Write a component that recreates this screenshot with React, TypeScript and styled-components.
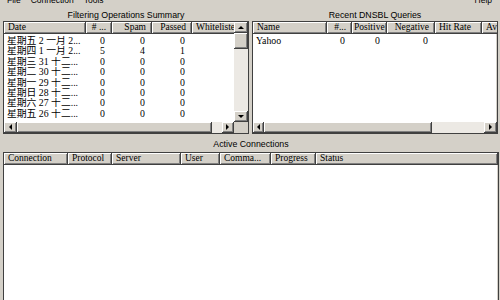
import React from "react";
import styled, { createGlobalStyle } from "styled-components";

const GlobalStyle = createGlobalStyle`
  html, body { margin: 0; padding: 0; background: #d4d0c8; }
  body { width: 500px; height: 300px; overflow: hidden; }
`;

const SANS = `"Liberation Sans", Arial, sans-serif`;
const SERIF = `"Liberation Serif", "Noto Sans CJK TC", serif`;

const Window = styled.div`
  box-sizing: border-box;
  width: 500px;
  height: 300px;
  overflow: hidden;
  background: #d4d0c8;
  padding: 0 1px 0 3px;
  display: flex;
  flex-direction: column;
  color: #000;
`;

const MenuBar = styled.div`
  flex: none;
  height: 13px;
  margin-top: -4px;
  display: flex;
  align-items: flex-start;
  padding-left: 4px;
  gap: 10px;
  font: 8.5px/9px ${SANS};
`;

const MenuItem = styled.span<{ $right?: boolean }>`
  margin-left: ${(p) => (p.$right ? "auto" : "0")};
  margin-right: ${(p) => (p.$right ? "7px" : "0")};
`;

const TopRow = styled.div`
  flex: none;
  display: grid;
  grid-template-columns: 246px 246px;
  column-gap: 3px;
`;

const Panel = styled.div`
  display: flex;
  flex-direction: column;
`;

const SectionTitle = styled.div<{ $tall?: boolean }>`
  flex: none;
  font: 8.8px ${SANS};
  line-height: ${(p) => (p.$tall ? "15px" : "12px")};
  padding-top: ${(p) => (p.$tall ? "3px" : "0")};
  text-align: center;
  white-space: nowrap;
`;

const Frame = styled.div<{ $height: number; $v: boolean; $h: boolean }>`
  box-sizing: border-box;
  height: ${(p) => p.$height}px;
  flex: none;
  border: 1px solid #404040;
  box-shadow: inset -1px -1px 0 #d4d0c8;
  background: #fff;
  display: grid;
  grid-template-columns: ${(p) => (p.$v ? "1fr 14px" : "1fr")};
  grid-template-rows: ${(p) => (p.$h ? "1fr 11px" : "1fr")};
  overflow: hidden;
`;

const ListArea = styled.div`
  overflow: hidden;
  min-width: 0;
  display: flex;
  flex-direction: column;
`;

const HeaderRow = styled.div`
  display: flex;
  height: 12px;
  flex: none;
`;

const HeaderCell = styled.div<{ $w?: number; $right?: boolean }>`
  box-sizing: border-box;
  flex: ${(p) => (p.$w ? `0 0 ${p.$w}px` : "1 0 auto")};
  height: 12px;
  background: #d4d0c8;
  border-right: 1px solid #404040;
  border-bottom: 1px solid #404040;
  box-shadow: inset 1px 1px 0 #fff, inset -1px -1px 0 #808080;
  font: 9.5px/11px ${SERIF};
  padding: 0 ${(p) => (p.$right ? "5px" : "3px")} 0 ${(p) => (p.$right ? "2px" : "4px")};
  text-align: ${(p) => (p.$right ? "right" : "left")};
  white-space: nowrap;
  overflow: hidden;
`;

const Body = styled.div`
  padding-top: 2px;
  flex: 1;
`;

const Row = styled.div`
  display: flex;
  height: 10.4px;
`;

const Cell = styled.div<{ $w: number; $right?: boolean }>`
  box-sizing: border-box;
  flex: 0 0 ${(p) => p.$w}px;
  font: 9.8px/10.4px ${SERIF};
  text-align: ${(p) => (p.$right ? "right" : "left")};
  padding: 0 ${(p) => (p.$right ? "7px" : "0")} 0 ${(p) => (p.$right ? "0" : "3px")};
  white-space: nowrap;
  overflow: hidden;
`;

const VBar = styled.div`
  display: flex;
  flex-direction: column;
  background: #ece9e4;
`;

const HBar = styled.div`
  display: flex;
  background: #ece9e4;
  min-width: 0;
`;

const Knob = styled.div<{ $size?: number }>`
  box-sizing: border-box;
  flex: ${(p) => (p.$size ? `0 0 ${p.$size}px` : "1 1 auto")};
  background: #d4d0c8;
  border-right: 1px solid #404040;
  border-bottom: 1px solid #404040;
  box-shadow: inset 1px 1px 0 #fff, inset -1px -1px 0 #808080;
  display: flex;
  align-items: center;
  justify-content: center;
`;

const Track = styled.div`
  flex: 1 1 auto;
`;

const Corner = styled.div`
  background: #d4d0c8;
`;

type Dir = "up" | "down" | "left" | "right";

const Arrow = styled.span<{ $dir: Dir }>`
  width: 0;
  height: 0;
  border-style: solid;
  border-color: transparent;
  ${(p) =>
    p.$dir === "up"
      ? "border-width: 0 3px 3px 3px; border-bottom-color: #000;"
      : p.$dir === "down"
      ? "border-width: 3px 3px 0 3px; border-top-color: #000;"
      : p.$dir === "left"
      ? "border-width: 3px 3px 3px 0; border-right-color: #000;"
      : "border-width: 3px 0 3px 3px; border-left-color: #000;"}
`;

type Col = { label: string; w?: number; right?: boolean };

type ScrollSpec = { start: number; thumb: number; end: number };

function ListView(props: {
  height: number;
  cols: Col[];
  rows: string[][];
  v?: ScrollSpec;
  h?: ScrollSpec;
}) {
  const { height, cols, rows, v, h } = props;
  return (
    <Frame $height={height} $v={!!v} $h={!!h}>
      <ListArea>
        <HeaderRow>
          {cols.map((c, i) => (
            <HeaderCell key={i} $w={c.w} $right={c.right}>
              {c.label}
            </HeaderCell>
          ))}
        </HeaderRow>
        <Body>
          {rows.map((r, i) => (
            <Row key={i}>
              {r.map((t, j) => (
                <Cell key={j} $w={cols[j].w ?? 100} $right={cols[j].right}>
                  {t}
                </Cell>
              ))}
            </Row>
          ))}
        </Body>
      </ListArea>
      {v && (
        <VBar>
          <Knob $size={v.start}>
            <Arrow $dir="up" />
          </Knob>
          <Knob $size={v.thumb} />
          <Track />
          <Knob $size={v.end}>
            <Arrow $dir="down" />
          </Knob>
        </VBar>
      )}
      {h && (
        <HBar>
          <Knob $size={h.start}>
            <Arrow $dir="left" />
          </Knob>
          <Knob $size={h.thumb} />
          <Track />
          <Knob $size={h.end}>
            <Arrow $dir="right" />
          </Knob>
        </HBar>
      )}
      {v && h && <Corner />}
    </Frame>
  );
}

const filterCols: Col[] = [
  { label: "Date", w: 82 },
  { label: "# ...", w: 26, right: true },
  { label: "Spam", w: 40, right: true },
  { label: "Passed", w: 40, right: true },
  { label: "Whitelisted", w: 60 },
];

const filterRows = [
  ["星期五 2 一月 2...", "0", "0", "0"],
  ["星期四 1 一月 2...", "5", "4", "1"],
  ["星期三 31 十二...", "0", "0", "0"],
  ["星期二 30 十二...", "0", "0", "0"],
  ["星期一 29 十二...", "0", "0", "0"],
  ["星期日 28 十二...", "0", "0", "0"],
  ["星期六 27 十二...", "0", "0", "0"],
  ["星期五 26 十二...", "0", "0", "0"],
];

const dnsCols: Col[] = [
  { label: "Name", w: 74 },
  { label: "#...", w: 25, right: true },
  { label: "Positive", w: 35, right: true },
  { label: "Negative", w: 48, right: true },
  { label: "Hit Rate", w: 47 },
  { label: "Avg", w: 60 },
];

const dnsRows = [["Yahoo", "0", "0", "0"]];

const connCols: Col[] = [
  { label: "Connection", w: 64 },
  { label: "Protocol", w: 44 },
  { label: "Server", w: 69 },
  { label: "User", w: 39 },
  { label: "Comma...", w: 51 },
  { label: "Progress", w: 45 },
  { label: "Status" },
];

export default function App() {
  return (
    <>
      <GlobalStyle />
      <Window>
        <MenuBar>
          <MenuItem>File</MenuItem>
          <MenuItem>Connection</MenuItem>
          <MenuItem>Tools</MenuItem>
          <MenuItem $right>Help</MenuItem>
        </MenuBar>
        <TopRow>
          <Panel>
            <SectionTitle>Filtering Operations Summary</SectionTitle>
            <ListView
              height={113}
              cols={filterCols}
              rows={filterRows}
              v={{ start: 11, thumb: 16, end: 11 }}
              h={{ start: 13, thumb: 195, end: 12 }}
            />
          </Panel>
          <Panel>
            <SectionTitle>Recent DNSBL Queries</SectionTitle>
            <ListView
              height={113}
              cols={dnsCols}
              rows={dnsRows}
              h={{ start: 11, thumb: 168, end: 13 }}
            />
          </Panel>
        </TopRow>
        <SectionTitle $tall>Active Connections</SectionTitle>
        <ListView height={160} cols={connCols} rows={[]} />
      </Window>
    </>
  );
}
